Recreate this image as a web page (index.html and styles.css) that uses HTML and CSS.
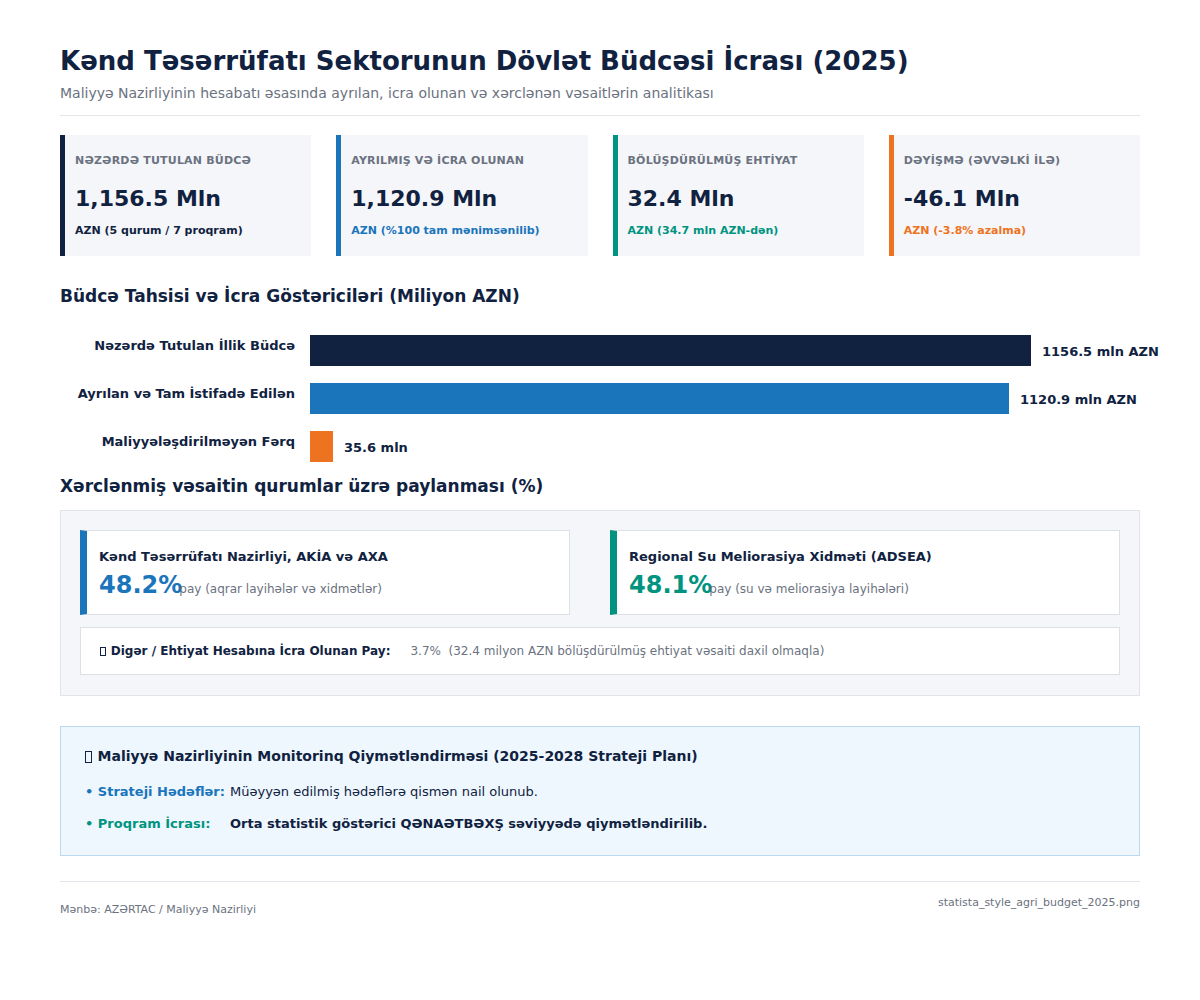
FILE: index.html
```html
<!DOCTYPE html>
<html lang="az">
<head>
<meta charset="utf-8">
<title>Kənd Təsərrüfatı Sektorunun Dövlət Büdcəsi İcrası (2025)</title>
<link rel="stylesheet" href="styles.css">
</head>
<body>
<div class="page">
  <header class="head">
    <h1 class="title">Kənd Təsərrüfatı Sektorunun Dövlət Büdcəsi İcrası (2025)</h1>
    <p class="subtitle">Maliyyə Nazirliyinin hesabatı əsasında ayrılan, icra olunan və xərclənən vəsaitlərin analitikası</p>
  </header>

  <section class="kpis">
    <div class="kpi kpi-navy">
      <div class="kpi-label">Nəzərdə tutulan büdcə</div>
      <div class="kpi-value">1,156.5 Mln</div>
      <div class="kpi-sub">AZN (5 qurum / 7 proqram)</div>
    </div>
    <div class="kpi kpi-blue">
      <div class="kpi-label">Ayrılmış və İcra Olunan</div>
      <div class="kpi-value">1,120.9 Mln</div>
      <div class="kpi-sub">AZN (%100 tam mənimsənilib)</div>
    </div>
    <div class="kpi kpi-teal">
      <div class="kpi-label">Bölüşdürülmüş ehtiyat</div>
      <div class="kpi-value">32.4 Mln</div>
      <div class="kpi-sub">AZN (34.7 mln AZN-dən)</div>
    </div>
    <div class="kpi kpi-orange">
      <div class="kpi-label">Dəyişmə (əvvəlki ilə)</div>
      <div class="kpi-value">-46.1 Mln</div>
      <div class="kpi-sub">AZN (-3.8% azalma)</div>
    </div>
  </section>

  <h2 class="section-title sec-bars">Büdcə Tahsisi və İcra Göstəriciləri (Miliyon AZN)</h2>

  <section class="bars">
    <div class="bar-row">
      <div class="bar-label">Nəzərdə Tutulan İllik Büdcə</div>
      <div class="bar-track">
        <div class="bar bar-navy" style="width: 721px"></div>
        <span class="bar-value">1156.5 mln AZN</span>
      </div>
    </div>
    <div class="bar-row">
      <div class="bar-label">Ayrılan və Tam İstifadə Edilən</div>
      <div class="bar-track">
        <div class="bar bar-blue" style="width: 699px"></div>
        <span class="bar-value">1120.9 mln AZN</span>
      </div>
    </div>
    <div class="bar-row">
      <div class="bar-label">Maliyyələşdirilməyən Fərq</div>
      <div class="bar-track">
        <div class="bar bar-orange" style="width: 23px"></div>
        <span class="bar-value">35.6 mln</span>
      </div>
    </div>
  </section>

  <h2 class="section-title sec-share">Xərclənmiş vəsaitin qurumlar üzrə paylanması (%)</h2>

  <section class="panel">
    <div class="shares">
      <div class="share share-blue">
        <div class="share-title">Kənd Təsərrüfatı Nazirliyi, AKİA və AXA</div>
        <div class="share-line"><span class="share-pct">48.2%</span><span class="share-note">pay (aqrar layihələr və xidmətlər)</span></div>
      </div>
      <div class="share share-teal">
        <div class="share-title">Regional Su Meliorasiya Xidməti (ADSEA)</div>
        <div class="share-line"><span class="share-pct">48.1%</span><span class="share-note">pay (su və meliorasiya layihələri)</span></div>
      </div>
    </div>
    <div class="other">
      <span class="other-label"><span class="tofu" aria-hidden="true"></span>Digər / Ehtiyat Hesabına İcra Olunan Pay:</span>
      <span class="other-value">3.7%&nbsp; (32.4 milyon AZN bölüşdürülmüş ehtiyat vəsaiti daxil olmaqla)</span>
    </div>
  </section>

  <section class="monitor">
    <h3 class="monitor-title"><span class="tofu" aria-hidden="true"></span>Maliyyə Nazirliyinin Monitorinq Qiymətləndirməsi (2025-2028 Strateji Planı)</h3>
    <div class="monitor-row">
      <span class="m-key m-blue">• Strateji Hədəflər:</span>
      <span class="m-text">Müəyyən edilmiş hədəflərə qismən nail olunub.</span>
    </div>
    <div class="monitor-row">
      <span class="m-key m-teal">• Proqram İcrası:</span>
      <span class="m-text m-strong">Orta statistik göstərici QƏNAƏTBƏXŞ səviyyədə qiymətləndirilib.</span>
    </div>
  </section>

  <footer class="foot">
    <span class="foot-src">Mənbə: AZƏRTAC / Maliyyə Nazirliyi</span>
    <span class="foot-file">statista_style_agri_budget_2025.png</span>
  </footer>
</div>
</body>
</html>
```

FILE: styles.css
```css
* { box-sizing: border-box; }
html, body { margin: 0; padding: 0; background: #ffffff; }
body {
  font-family: "DejaVu Sans", "Noto Sans", sans-serif;
  color: #10223f;
}
.page {
  width: 1200px;
  padding: 44px 60px 40px;
}
.head {
  border-bottom: 1px solid #e3e6ea;
  padding-bottom: 13px;
}
.title {
  margin: 0;
  font-size: 26px;
  line-height: 34px;
  font-weight: bold;
  color: #10223f;
}
.subtitle {
  margin: 6px 0 0;
  font-size: 14px;
  line-height: 18px;
  color: #6b7280;
}

.kpis {
  margin-top: 19px;
  display: grid;
  grid-template-columns: repeat(4, 1fr);
  gap: 25px;
}
.kpi {
  background: #f5f6fa;
  border-left: 5px solid #10223f;
  padding: 19px 10px 18px 10px;
  height: 121px;
}
.kpi-label {
  font-size: 11px;
  line-height: 14px;
  font-weight: bold;
  text-transform: uppercase;
  color: #6b7280;
  letter-spacing: 0.2px;
}
.kpi-value {
  margin-top: 17px;
  font-size: 22px;
  line-height: 28px;
  font-weight: bold;
  color: #10223f;
}
.kpi-sub {
  margin-top: 11px;
  font-size: 11px;
  line-height: 14px;
  font-weight: bold;
}
.kpi-navy { border-left-color: #10223f; }
.kpi-navy .kpi-sub { color: #10223f; }
.kpi-blue { border-left-color: #1b75bb; }
.kpi-blue .kpi-sub { color: #1b75bb; }
.kpi-teal { border-left-color: #009480; }
.kpi-teal .kpi-sub { color: #009480; }
.kpi-orange { border-left-color: #ee7320; }
.kpi-orange .kpi-sub { color: #ee7320; }

.section-title {
  margin: 0;
  font-size: 17px;
  line-height: 20px;
  font-weight: bold;
  color: #10223f;
}
.sec-bars { margin-top: 30px; }
.sec-share { margin-top: 14px; }

.bars {
  margin-top: 29px;
  display: flex;
  flex-direction: column;
  gap: 17px;
}
.bar-row {
  display: grid;
  grid-template-columns: 235px 1fr;
  column-gap: 15px;
  align-items: start;
}
.bar-label {
  text-align: right;
  font-size: 13px;
  line-height: 16px;
  font-weight: bold;
  color: #10223f;
  margin-top: 3px;
}
.bar-track {
  display: flex;
  align-items: center;
  height: 31px;
}
.bar {
  height: 31px;
  flex: none;
}
.bar-navy { background: #10223f; }
.bar-blue { background: #1b75bb; }
.bar-orange { background: #ee7320; }
.bar-value {
  margin-left: 11px;
  font-size: 13px;
  font-weight: bold;
  color: #10223f;
  white-space: nowrap;
  padding-top: 1px;
}

.panel {
  margin-top: 14px;
  background: #f5f6fa;
  border: 1px solid #e0e3e8;
  padding: 19px 19px 20px;
}
.shares {
  display: grid;
  grid-template-columns: 490px 1fr;
  gap: 40px;
}
.share {
  background: #ffffff;
  border: 1px solid #dde1e6;
  border-left: 7px solid #1b75bb;
  height: 85px;
  padding: 18px 12px 0 12px;
}
.share-blue { border-left-color: #1b75bb; }
.share-teal { border-left-color: #009480; }
.share-title {
  font-size: 13px;
  line-height: 16px;
  font-weight: bold;
  color: #10223f;
}
.share-line {
  margin-top: 6px;
  display: flex;
  align-items: baseline;
}
.share-pct {
  font-size: 24px;
  line-height: 28px;
  font-weight: bold;
}
.share-blue .share-pct { color: #1b75bb; }
.share-teal .share-pct { color: #009480; }
.share-note {
  font-size: 12px;
  color: #6b7280;
  margin-left: -3px;
}
.other {
  margin-top: 12px;
  background: #ffffff;
  border: 1px solid #dde1e6;
  height: 48px;
  padding: 0 19px;
  display: flex;
  align-items: center;
  font-size: 12px;
}
.other-label {
  font-weight: bold;
  color: #10223f;
}
.other-value {
  margin-left: 20px;
  color: #6b7280;
}
.tofu {
  display: inline-block;
  width: 0.5em;
  height: 0.82em;
  border: 1px solid currentColor;
  margin-right: 0.4em;
  vertical-align: -0.12em;
}

.monitor {
  margin-top: 30px;
  background: #eff7fe;
  border: 1px solid #bcd9f2;
  height: 130px;
  padding: 19px 24px 0;
}
.monitor-title {
  margin: 0;
  font-size: 14px;
  line-height: 20px;
  font-weight: bold;
  color: #10223f;
}
.monitor-row {
  display: flex;
  align-items: baseline;
  font-size: 13px;
  line-height: 18px;
  margin-top: 17px;
}
.monitor-row + .monitor-row { margin-top: 14px; }
.m-key {
  font-weight: bold;
  width: 145px;
  flex: none;
}
.m-blue { color: #1b75bb; }
.m-teal { color: #009480; }
.m-text { color: #10223f; }
.m-strong { font-weight: bold; }

.foot {
  margin-top: 25px;
  border-top: 1px solid #e3e6ea;
  padding-top: 14px;
  display: flex;
  justify-content: space-between;
  align-items: flex-start;
  font-size: 11px;
  line-height: 14px;
  color: #6b7280;
}
.foot-src { margin-top: 7px; }
```
